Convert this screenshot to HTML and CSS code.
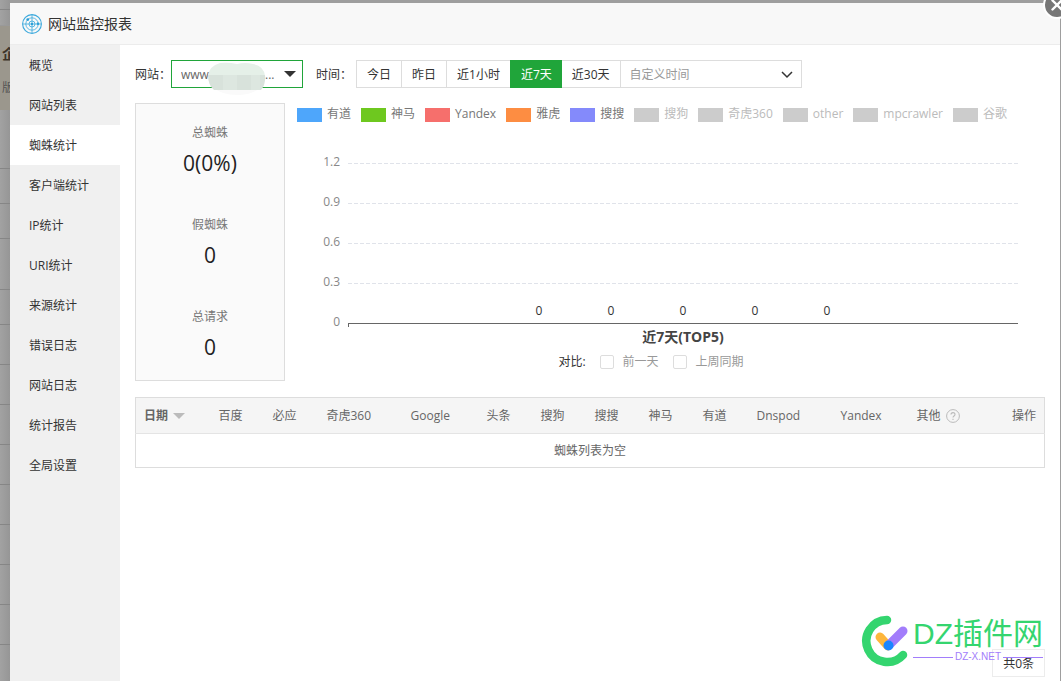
FILE: index.html
```html
<!DOCTYPE html>
<html lang="zh-CN">
<head>
<meta charset="utf-8">
<title>网站监控报表</title>
<link rel="stylesheet" href="styles.css">
</head>
<body>
<div class="page">
  <div class="backdrop" aria-hidden="true">
    <div class="bd-row bd-first"></div>
    <div class="bd-row bd-gap"></div>
    <div class="bd-notice"><b>企</b><span>版</span></div>
    <div class="bd-row bd-tall"></div>
    <div class="bd-row bd-mid"></div>
    <div class="bd-row bd-mid"></div>
    <div class="bd-row bd-wide"></div>
    <div class="bd-row bd-mid"></div>
    <div class="bd-row"></div><div class="bd-row"></div><div class="bd-row"></div><div class="bd-row"></div>
    <div class="bd-row"></div><div class="bd-row"></div><div class="bd-row"></div><div class="bd-row"></div>
  </div>

  <section class="dialog">
    <header class="dialog-head">
      <svg class="radar" viewBox="0 0 20 20" width="20" height="20" fill="none" stroke="#3aa8dc">
        <circle cx="10" cy="10" r="9.4" stroke-width="1.1"/>
        <circle cx="10" cy="10" r="6.2" stroke-width=".8"/>
        <circle cx="10" cy="10" r="3" stroke-width=".8"/>
        <path d="M10 1v18M1 10h18" stroke-width=".8"/>
        <circle cx="10" cy="10" r="1.2" fill="#2a9fd8" stroke="none"/>
        <circle cx="5.8" cy="5.6" r="1.4" fill="#2a9fd8" stroke="none"/>
        <circle cx="16" cy="9.8" r="1.3" fill="#2a9fd8" stroke="none"/>
      </svg>
      <h1>网站监控报表</h1>
      <button class="close" type="button" aria-label="关闭">
        <svg viewBox="0 0 28 28" width="28" height="28">
          <circle cx="14" cy="14" r="13" fill="#777" stroke="#fff" stroke-width="2"/>
          <path d="M9.5 9.5l9 9M18.5 9.5l-9 9" stroke="#fff" stroke-width="2.4" stroke-linecap="round"/>
        </svg>
      </button>
    </header>

    <div class="dialog-body">
      <nav class="side">
        <a href="#">概览</a>
        <a href="#">网站列表</a>
        <a href="#" class="active">蜘蛛统计</a>
        <a href="#">客户端统计</a>
        <a href="#">IP统计</a>
        <a href="#">URI统计</a>
        <a href="#">来源统计</a>
        <a href="#">错误日志</a>
        <a href="#">网站日志</a>
        <a href="#">统计报告</a>
        <a href="#">全局设置</a>
      </nav>

      <main class="content">
        <form class="filters">
          <label for="site">网站：</label>
          <div class="site-box">
            <select id="site"><option>www&nbsp;&nbsp;&nbsp;&nbsp;&nbsp;&nbsp;&nbsp;&nbsp;&nbsp;&nbsp;&nbsp;&nbsp;&nbsp;&nbsp;&nbsp;&nbsp;&nbsp;&nbsp;...</option></select>
            <svg class="caret" viewBox="0 0 12 6" width="12" height="6"><path d="M0 0h12L6 6z" fill="#333"/></svg>
            <svg class="mask" viewBox="0 0 58 34" width="58" height="34">
              <path d="M6 26h46q-8 7-23 7T6 26z" fill="#fafafa"/>
              <path d="M0 14Q1 4 12 1q8-1 17 1 8-2 16 0 11 2 12 12z" fill="#e5f0e8"/>
              <path d="M0 13h57q1 9-4 15H6Q0 23 0 13z" fill="#d8e2db"/>
              <path d="M15 13h14v15H15zM43 13h9v15h-9z" fill="#dde7e0"/>
            </svg>
          </div>
          <label for="range" class="time-label">时间：</label>
          <div class="range">
            <button type="button">今日</button>
            <button type="button">昨日</button>
            <button type="button">近1小时</button>
            <button type="button" class="on">近7天</button>
            <button type="button">近30天</button>
            <div class="range-box">
              <select id="range"><option>自定义时间</option></select>
              <svg class="chev" viewBox="0 0 12 8" width="12" height="8"><path d="M1 1l5 5 5-5" fill="none" stroke="#333" stroke-width="1.5"/></svg>
            </div>
          </div>
        </form>

        <div class="overview">
          <dl class="stats">
            <div><dt>总蜘蛛</dt><dd>0(0%)</dd></div>
            <div><dt>假蜘蛛</dt><dd>0</dd></div>
            <div><dt>总请求</dt><dd>0</dd></div>
          </dl>

          <div class="chart">
            <ul class="legend">
              <li><i class="c-blue"></i>有道</li>
              <li><i class="c-green"></i>神马</li>
              <li><i class="c-red"></i>Yandex</li>
              <li><i class="c-orange"></i>雅虎</li>
              <li><i class="c-violet"></i>搜搜</li>
              <li class="off"><i></i>搜狗</li>
              <li class="off"><i></i>奇虎360</li>
              <li class="off"><i></i>other</li>
              <li class="off"><i></i>mpcrawler</li>
              <li class="off"><i></i>谷歌</li>
            </ul>
            <div class="plot">
              <div class="y-axis"><span>1.2</span><span>0.9</span><span>0.6</span><span>0.3</span><span>0</span></div>
              <div class="plot-area">
                <div class="band"></div>
                <div class="band"></div>
                <div class="band"></div>
                <div class="band values"><span>0</span><span>0</span><span>0</span><span>0</span><span>0</span></div>
                <div class="axis"></div>
                <h2>近7天(TOP5)</h2>
              </div>
            </div>
            <div class="compare">
              <span>对比:</span>
              <label><input type="checkbox">前一天</label>
              <label><input type="checkbox">上周同期</label>
            </div>
          </div>
        </div>

        <table class="spiders">
          <colgroup>
            <col class="w-date"><col class="w-s"><col class="w-s"><col class="w-l"><col class="w-m">
            <col class="w-s"><col class="w-s"><col class="w-s"><col class="w-s"><col class="w-s">
            <col class="w-l"><col class="w-m"><col class="w-m"><col>
          </colgroup>
          <thead>
            <tr>
              <th class="sorted">日期<svg class="sort" viewBox="0 0 12 6" width="12" height="6"><path d="M0 0h12L6 6z" fill="#bbb"/></svg></th>
              <th>百度</th><th>必应</th><th>奇虎360</th><th>Google</th><th>头条</th><th>搜狗</th><th>搜搜</th><th>神马</th><th>有道</th><th>Dnspod</th><th>Yandex</th>
              <th>其他<svg class="help" viewBox="0 0 14 14" width="14" height="14" fill="none" stroke="#bbb"><circle cx="7" cy="7" r="6.4"/><path d="M5 5.6C5 3 9 3 9 5.4 9 7 7 7 7 8.6M7 9.7v1.2" stroke-width="1.1"/></svg></th>
              <th class="end">操作</th>
            </tr>
          </thead>
          <tbody><tr><td colspan="14">蜘蛛列表为空</td></tr></tbody>
        </table>

        <div class="pager"><span>共0条</span></div>
      </main>
    </div>
  </section>
</div>

<div class="brand">
  <svg viewBox="0 0 48 52" width="48" height="52" fill="none" stroke-linecap="round">
    <path d="M26 5A21 21 0 1 0 42 40" stroke="#34d56f" stroke-width="8.5"/>
    <path d="M19 22l8 9" stroke="#fdb63c" stroke-width="9"/>
    <path d="M28 30l14-14" stroke="#a27dfb" stroke-width="9"/>
    <circle cx="27.500" cy="30.500" r="5" fill="#1a86ff"/>
  </svg>
  <div class="brand-text">
    <div class="brand-name">DZ插件网</div>
    <div class="brand-url"><span>DZ-X.NET</span></div>
  </div>
</div>
</body>
</html>
```
FILE: styles.css
```css
* { box-sizing: border-box; }

body {
  margin: 0;
  background: #9e9e9e;
  color: #333;
  font: 12px/20px "Open Sans", "Noto Sans CJK SC", sans-serif;
}

h1, h2, dl, dd, ul { margin: 0; padding: 0; }

button, select, input { font: inherit; color: inherit; margin: 0; }

.page {
  display: grid;
  grid-template-columns: 10px 1fr 1px;
  height: 100vh;
  overflow: hidden;
}

/* Dimmed page behind the dialog */
.backdrop { overflow: hidden; background: linear-gradient(90deg, #a2a2a2, #969696); }
.bd-row { height: 40px; border-bottom: 1px solid #868686; }
.bd-first { height: 10px; }
.bd-gap { height: 16px; border-color: #999; }
.bd-tall { height: 59px; }
.bd-mid { height: 35px; }
.bd-wide { height: 51px; }
.bd-notice {
  display: flex;
  flex-direction: column;
  gap: 14px;
  height: 84px;
  padding: 18px 0 0 2px;
  background: #9b978d;
  color: #555;
  white-space: nowrap;
}
.bd-notice b { font-size: 14px; color: #3c3329; }

.dialog {
  display: flex;
  flex-direction: column;
  min-width: 0;
  margin-top: 3px;
  background: #fff;
}
.dialog-head {
  position: relative;
  display: flex;
  align-items: center;
  gap: 6px;
  height: 42px;
  padding: 0 12px;
  background: #f8f8f8;
  border-bottom: 1px solid #ececec;
}
.dialog-head h1 { font-size: 14px; font-weight: 400; }
.close {
  position: absolute;
  top: -12px;
  right: -11px;
  width: 28px;
  height: 28px;
  padding: 0;
  border: 0;
  background: none;
}
.close svg { display: block; }

.dialog-body { display: flex; flex: 1; min-height: 0; }

.side { width: 110px; flex: none; background: #f0f0f0; }
.side a {
  display: block;
  padding: 2px 19px 0;
  line-height: 38px;
  color: #333;
  text-decoration: none;
}
.side .active { background: #fff; }

.content {
  display: flex;
  flex-direction: column;
  flex: 1;
  min-width: 0;
  padding: 15px 15px 4px;
}

.filters { display: flex; align-items: center; height: 28px; }
.filters > label { padding-top: 2px; }
.site-box { position: relative; width: 132px; height: 28px; }
.site-box select {
  appearance: none;
  width: 100%;
  height: 100%;
  padding: 2px 9px 0;
  border: 1px solid #20a53a;
  border-radius: 0;
  background: #fff;
  color: #666;
}
.caret { position: absolute; top: 11px; right: 7px; }
.mask { position: absolute; top: 2px; left: 37px; }
.time-label { margin: 0 4px 0 13px; }
.range { display: flex; height: 28px; }
.range button {
  padding: 2px 10px 0;
  border: solid #ddd;
  border-width: 1px 0 1px 1px;
  background: #fff;
}
.range .on { border-color: #20a53a; background: #20a53a; color: #fff; }
.range .on + button { border-left: 0; }
.range-box { position: relative; width: 182px; }
.range-box select {
  appearance: none;
  width: 100%;
  height: 100%;
  padding: 2px 9px 0;
  border: 1px solid #ddd;
  border-radius: 0;
  background: #fff;
  color: #999;
}
.chev { position: absolute; top: 11px; right: 9px; }

.overview { display: flex; gap: 12px; margin-top: 15px; }
.stats {
  width: 150px;
  flex: none;
  border: 1px solid #ddd;
  background: #fafafa;
  text-align: center;
}
.stats div { padding: 19px 0 13px; }
.stats dt { color: #777; }
.stats dd { font-size: 21px; line-height: 40px; color: #222; }

.chart { flex: 1; min-width: 0; padding-top: 1px; }
.legend { display: flex; gap: 10px; list-style: none; color: #777; white-space: nowrap; }
.legend li { display: flex; align-items: center; gap: 5px; }
.legend i { width: 25px; height: 14px; margin-top: 1px; background: #ccc; }
.legend .off { color: #bbb; }
.legend .c-blue { background: #4ea6fb; }
.legend .c-green { background: #6ec81f; }
.legend .c-red { background: #f66f6c; }
.legend .c-orange { background: #fd8d42; }
.legend .c-violet { background: #848afb; }

.plot { display: flex; gap: 8px; margin-top: 28px; padding-right: 27px; }
.y-axis {
  display: flex;
  flex-direction: column;
  gap: 20px;
  width: 43px;
  height: 180px;
  text-align: right;
  color: #888;
}
.plot-area { flex: 1; padding-top: 11px; }
.band {
  height: 40px;
  background: repeating-linear-gradient(90deg, #e0e3ea 0 4px, #fff 4px 6px) top / 100% 1px no-repeat;
}
.values { display: flex; justify-content: center; padding-top: 18px; }
.values span { width: 72px; text-align: center; }
.axis { height: 4px; border: solid #666; border-width: 1px 0 0 1px; }
.plot-area h2 { font-size: 14px; line-height: 20px; text-align: center; color: #444; }

.compare { display: flex; justify-content: center; gap: 14px; margin-top: 5px; padding-right: 40px; }
.compare label { display: flex; align-items: center; gap: 9px; color: #999; }
.compare input {
  appearance: none;
  width: 14px;
  height: 14px;
  border: 1px solid #ddd;
  border-radius: 2px;
  background: #fff;
}

.spiders {
  width: 100%;
  margin-top: 16px;
  border: 1px solid #ddd;
  border-collapse: collapse;
  table-layout: fixed;
  color: #666;
}
.spiders th {
  height: 36px;
  padding: 0 8px;
  background: #f5f5f5;
  border-bottom: 1px solid #e4e4e4;
  font-weight: 400;
  text-align: left;
  white-space: nowrap;
}
.spiders .sorted { font-weight: 700; }
.spiders .end { text-align: right; }
.spiders td { height: 34px; padding: 0 8px; text-align: center; }
.w-date { width: 75px; }
.w-s { width: 54px; }
.w-m { width: 76px; }
.w-l { width: 84px; }
.sort { margin-left: 5px; vertical-align: 1px; }
.help { margin-left: 5px; vertical-align: middle; }

.pager { display: flex; justify-content: flex-end; margin-top: auto; }
.pager span { padding: 4px 10px 2px; border: 1px solid #ececec; }

/* Brand mark laid over the lower right corner */
.brand {
  position: absolute;
  right: 18px;
  bottom: 14px;
  display: flex;
  gap: 4px;
  pointer-events: none;
}
.brand-name {
  padding-top: 2px;
  font: 30px/34px "Liberation Sans", "Noto Sans CJK SC", sans-serif;
  color: #34d56f;
}
.brand-url {
  display: flex;
  align-items: center;
  gap: 2px;
  font: 10px/12px "Liberation Sans", sans-serif;
  color: #a27dfb;
}
.brand-url::before, .brand-url::after {
  content: "";
  flex: 1;
  height: 1px;
  background: #a27dfb;
}
```
